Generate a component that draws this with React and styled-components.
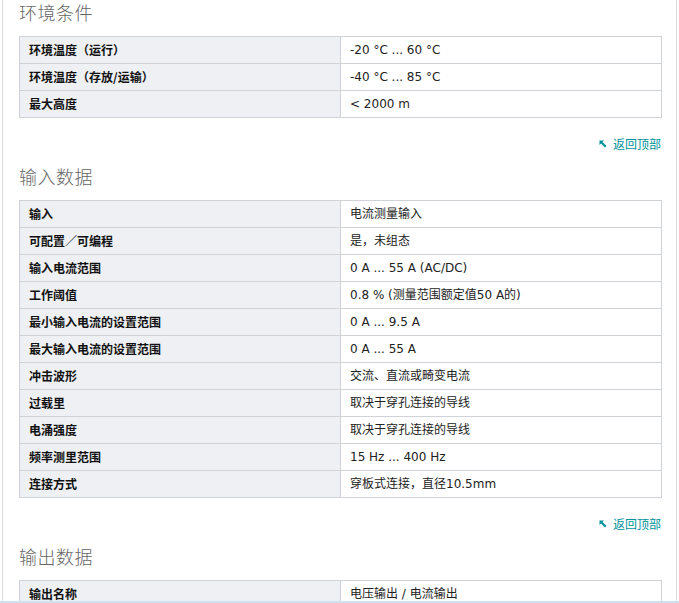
import React from 'react'
import styled, { createGlobalStyle } from 'styled-components'

const GlobalStyle = createGlobalStyle`
  html, body {
    margin: 0;
    padding: 0;
    background: #fff;
    overflow: hidden;
  }
  body {
    font-family: "Noto Sans CJK SC", "DejaVu Sans", sans-serif;
  }
`

const Page = styled.div`
  margin-left: 2px;
  width: 675px;
  min-height: 603px;
  border-left: 1px solid #dcdcdc;
  border-right: 1px solid #dcdcdc;
  padding: 0 14px 0 16px;
  box-sizing: border-box;
`

const Heading = styled.h2`
  margin: 0 0 12px 0;
  height: 24px;
  line-height: 24px;
  font-family: "Noto Sans CJK SC", serif;
  font-size: 18px;
  font-weight: 300;
  color: #666;
  letter-spacing: 0.5px;
`

const Table = styled.div`
  border-top: 1px solid #cfd2d6;
  border-left: 1px solid #cfd2d6;
  border-right: 1px solid #cfd2d6;
`

const Row = styled.div`
  display: grid;
  grid-template-columns: 320px 1fr;
  height: 27px;
  border-bottom: 1px solid #cfd2d6;
  box-sizing: border-box;
`

const Label = styled.div`
  background: #eef0f3;
  padding: 0 9px;
  font-size: 12px;
  font-weight: 700;
  color: #111;
  line-height: 26px;
  white-space: nowrap;
`

const Value = styled.div`
  border-left: 1px solid #cfd2d6;
  padding: 0 9px;
  font-family: "DejaVu Sans", "Noto Sans CJK SC", sans-serif;
  font-size: 12px;
  color: #222;
  line-height: 26px;
  white-space: nowrap;
`

const BackTop = styled.a`
  display: flex;
  justify-content: flex-end;
  align-items: center;
  gap: 6px;
  margin: 17px 1px 11px 0;
  height: 18px;
  line-height: 18px;
  font-size: 12px;
  color: #00929b;
  text-decoration: none;
`

const BottomLine = styled.div`
  position: fixed;
  left: 0;
  right: 0;
  bottom: 0;
  height: 2px;
  background: #cfe0f1;
`

const sections = [
  {
    title: '环境条件',
    rows: [
      ['环境温度（运行）', '-20 °C ... 60 °C'],
      ['环境温度（存放/运输）', '-40 °C ... 85 °C'],
      ['最大高度', '< 2000 m'],
    ],
  },
  {
    title: '输入数据',
    rows: [
      ['输入', '电流测量输入'],
      ['可配置／可编程', '是，未组态'],
      ['输入电流范围', '0 A ... 55 A (AC/DC)'],
      ['工作阈值', '0.8 % (测量范围额定值50 A的)'],
      ['最小输入电流的设置范围', '0 A ... 9.5 A'],
      ['最大输入电流的设置范围', '0 A ... 55 A'],
      ['冲击波形', '交流、直流或畸变电流'],
      ['过载里', '取决于穿孔连接的导线'],
      ['电涌强度', '取决于穿孔连接的导线'],
      ['频率测里范围', '15 Hz ... 400 Hz'],
      ['连接方式', '穿板式连接，直径10.5mm'],
    ],
  },
  {
    title: '输出数据',
    rows: [['输出名称', '电压输出 / 电流输出']],
  },
]

const Arrow = () => (
  <svg width="8" height="8" viewBox="0 0 8 8">
    <path d="M0.5 0.5 H5 L3.5 2 L7.5 6 L6 7.5 L2 3.5 L0.5 5 Z" fill="#00929b" />
  </svg>
)

const App = () => {
  return (
    <Page>
      <GlobalStyle />
      {sections.map((s, i) => (
        <section key={s.title}>
          <Heading>{s.title}</Heading>
          <Table>
            {s.rows.map(([k, v]) => (
              <Row key={k}>
                <Label>{k}</Label>
                <Value>{v}</Value>
              </Row>
            ))}
          </Table>
          {i < sections.length - 1 && (
            <BackTop href="#top">
              <Arrow />
              返回顶部
            </BackTop>
          )}
        </section>
      ))}
      <BottomLine />
    </Page>
  )
}

export default App
